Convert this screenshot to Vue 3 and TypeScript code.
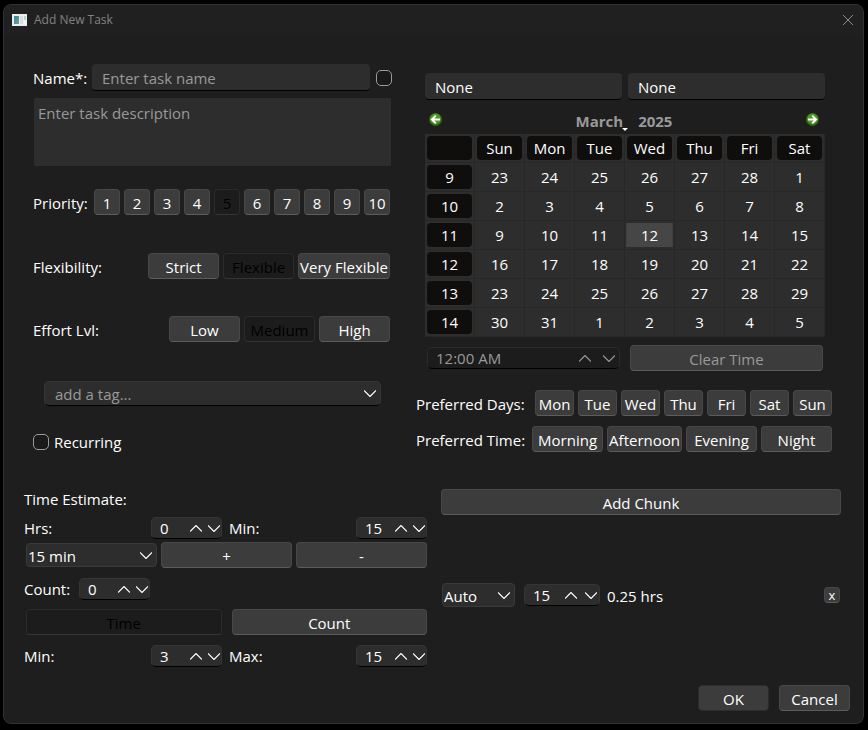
<script setup lang="ts">
import { ref } from 'vue'

interface Week {
  number: number
  days: number[]
}

const priorities = [1, 2, 3, 4, 5, 6, 7, 8, 9, 10]
const flexibilities = ['Strict', 'Flexible', 'Very Flexible']
const efforts = ['Low', 'Medium', 'High']
const weekDays = ['Mon', 'Tue', 'Wed', 'Thu', 'Fri', 'Sat', 'Sun']
const dayTimes = ['Morning', 'Afternoon', 'Evening', 'Night']
const calendarDays = ['Sun', 'Mon', 'Tue', 'Wed', 'Thu', 'Fri', 'Sat']
const weeks: Week[] = [
  { number: 9, days: [23, 24, 25, 26, 27, 28, 1] },
  { number: 10, days: [2, 3, 4, 5, 6, 7, 8] },
  { number: 11, days: [9, 10, 11, 12, 13, 14, 15] },
  { number: 12, days: [16, 17, 18, 19, 20, 21, 22] },
  { number: 13, days: [23, 24, 25, 26, 27, 28, 29] },
  { number: 14, days: [30, 31, 1, 2, 3, 4, 5] },
]

const priority = ref(5)
const flexibility = ref('Flexible')
const effort = ref('Medium')
const mode = ref('Time')
const selected = ref('11-12')

const name = ref('')
const description = ref('')
const tag = ref('')
const startDate = ref('None')
const dueDate = ref('None')
const time = ref('12:00 AM')
const hours = ref(0)
const minutes = ref(15)
const count = ref(0)
const minChunk = ref(3)
const maxChunk = ref(15)
const chunkSize = ref(15)
</script>

<template>
  <main class="dialog">
    <header class="titlebar">
      <svg class="app-icon" viewBox="0 0 15 12" aria-hidden="true">
        <defs>
          <linearGradient id="pane" x1="0" y1="0" x2="1" y2="1">
            <stop offset="0" stop-color="#3f7fa6" />
            <stop offset="1" stop-color="#5fae86" />
          </linearGradient>
        </defs>
        <rect width="15" height="12" fill="#e9eef2" />
        <rect x="2" y="2" width="5" height="8" fill="url(#pane)" />
        <rect x="8" y="2" width="3" height="8" fill="#dcdcdc" />
        <rect x="12" y="2" width="2" height="4" fill="#a9d8cf" />
        <rect x="12" y="6" width="2" height="4" fill="#f4f4f4" />
      </svg>
      <h1>Add New Task</h1>
      <button class="close" aria-label="Close">
        <svg viewBox="0 0 12 12" aria-hidden="true"><path d="M1 1 L11 11 M11 1 L1 11" /></svg>
      </button>
    </header>

    <div class="upper">
      <section class="details">
        <div class="row name-row">
          <label for="name">Name*:</label>
          <input id="name" v-model="name" class="line-input" type="text" placeholder="Enter task name" />
          <input class="check" type="checkbox" aria-label="Completed" />
        </div>
        <textarea v-model="description" placeholder="Enter task description" aria-label="Description"></textarea>

        <div class="row spread priority-row">
          <span>Priority:</span>
          <div class="group">
            <button v-for="p in priorities" :key="p" class="btn square" :disabled="p === priority" @click="priority = p">{{ p }}</button>
          </div>
        </div>
        <div class="row spread flexibility-row">
          <span>Flexibility:</span>
          <div class="group">
            <button v-for="f in flexibilities" :key="f" class="btn" :disabled="f === flexibility" @click="flexibility = f">{{ f }}</button>
          </div>
        </div>
        <div class="row spread effort-row">
          <span>Effort Lvl:</span>
          <div class="group">
            <button v-for="e in efforts" :key="e" class="btn" :disabled="e === effort" @click="effort = e">{{ e }}</button>
          </div>
        </div>

        <div class="field tag-field">
          <input v-model="tag" type="text" placeholder="add a tag..." aria-label="Tag" />
          <button class="step" aria-label="Show tags">
            <svg class="chevron" viewBox="0 0 12 7"><path d="M0 0.5 L6 6.5 L12 0.5" /></svg>
          </button>
        </div>
        <label class="recurring"><input class="check" type="checkbox" />Recurring</label>
      </section>

      <section class="schedule">
        <div class="calendar-block">
          <div class="dates">
            <input v-model="startDate" class="line-input" type="text" aria-label="Start date" />
            <input v-model="dueDate" class="line-input" type="text" aria-label="Due date" />
          </div>
          <div class="nav">
            <button class="nav-arrow" aria-label="Previous month">
              <svg viewBox="0 0 13 13">
                <circle cx="6.5" cy="6.5" r="6.5" fill="#2f6b12" />
                <circle cx="6.5" cy="5.8" r="5.4" fill="#4f9526" />
                <path d="M11 6.5 H3 M6.8 2.6 L2.9 6.5 L6.8 10.4" />
              </svg>
            </button>
            <div class="month">
              <button class="month-name">March<i class="caret"></i></button>
              <button>2025</button>
            </div>
            <button class="nav-arrow" aria-label="Next month">
              <svg viewBox="0 0 13 13">
                <circle cx="6.5" cy="6.5" r="6.5" fill="#2f6b12" />
                <circle cx="6.5" cy="5.8" r="5.4" fill="#4f9526" />
                <path d="M2 6.5 H10 M6.2 2.6 L10.1 6.5 L6.2 10.4" />
              </svg>
            </button>
          </div>
          <table class="calendar">
            <thead>
              <tr>
                <td><span class="pill"></span></td>
                <th v-for="d in calendarDays" :key="d" scope="col"><span class="pill">{{ d }}</span></th>
              </tr>
            </thead>
            <tbody>
              <tr v-for="w in weeks" :key="w.number">
                <th scope="row"><span class="pill">{{ w.number }}</span></th>
                <td
                  v-for="d in w.days"
                  :key="d"
                  :class="{ selected: selected === `${w.number}-${d}` }"
                  @click="selected = `${w.number}-${d}`"
                ><span class="day">{{ d }}</span></td>
              </tr>
            </tbody>
          </table>
          <div class="time-row">
            <div class="field time-field">
              <input v-model="time" type="text" aria-label="Time" disabled />
              <button class="step" aria-label="Later" disabled><svg class="chevron" viewBox="0 0 12 7"><path d="M0 6.5 L6 0.5 L12 6.5" /></svg></button>
              <button class="step" aria-label="Earlier" disabled><svg class="chevron" viewBox="0 0 12 7"><path d="M0 0.5 L6 6.5 L12 0.5" /></svg></button>
            </div>
            <button class="btn muted">Clear Time</button>
          </div>
        </div>

        <div class="row spread days-row">
          <span>Preferred Days:</span>
          <div class="group">
            <button v-for="d in weekDays" :key="d" class="btn narrow">{{ d }}</button>
          </div>
        </div>
        <div class="row spread times-row">
          <span>Preferred Time:</span>
          <div class="group">
            <button v-for="t in dayTimes" :key="t" class="btn">{{ t }}</button>
          </div>
        </div>
      </section>
    </div>

    <div class="lower">
      <section class="estimate">
        <h2>Time Estimate:</h2>
        <div class="pair">
          <div class="row spread">
            <label for="hours">Hrs:</label>
            <div class="field spin">
              <input id="hours" v-model.number="hours" type="text" />
              <button class="step" aria-label="More hours" @click="hours++"><svg class="chevron" viewBox="0 0 12 7"><path d="M0 6.5 L6 0.5 L12 6.5" /></svg></button>
              <button class="step" aria-label="Fewer hours" @click="hours--"><svg class="chevron" viewBox="0 0 12 7"><path d="M0 0.5 L6 6.5 L12 0.5" /></svg></button>
            </div>
          </div>
          <div class="row spread">
            <label for="minutes">Min:</label>
            <div class="field spin">
              <input id="minutes" v-model.number="minutes" type="text" />
              <button class="step" aria-label="More minutes" @click="minutes++"><svg class="chevron" viewBox="0 0 12 7"><path d="M0 6.5 L6 0.5 L12 6.5" /></svg></button>
              <button class="step" aria-label="Fewer minutes" @click="minutes--"><svg class="chevron" viewBox="0 0 12 7"><path d="M0 0.5 L6 6.5 L12 0.5" /></svg></button>
            </div>
          </div>
        </div>
        <div class="step-row">
          <div class="select">
            <select aria-label="Step"><option>15 min</option></select>
            <svg class="chevron" viewBox="0 0 12 7"><path d="M0 0.5 L6 6.5 L12 0.5" /></svg>
          </div>
          <button class="btn">+</button>
          <button class="btn">-</button>
        </div>
        <div class="row count-row">
          <label for="count">Count:</label>
          <div class="field spin">
            <input id="count" v-model.number="count" type="text" />
            <button class="step" aria-label="Higher count" @click="count++"><svg class="chevron" viewBox="0 0 12 7"><path d="M0 6.5 L6 0.5 L12 6.5" /></svg></button>
            <button class="step" aria-label="Lower count" @click="count--"><svg class="chevron" viewBox="0 0 12 7"><path d="M0 0.5 L6 6.5 L12 0.5" /></svg></button>
          </div>
        </div>
        <div class="mode-row">
          <button class="btn" :disabled="mode === 'Time'" @click="mode = 'Time'">Time</button>
          <button class="btn" :disabled="mode === 'Count'" @click="mode = 'Count'">Count</button>
        </div>
        <div class="pair">
          <div class="row spread">
            <label for="min-chunk">Min:</label>
            <div class="field spin">
              <input id="min-chunk" v-model.number="minChunk" type="text" />
              <button class="step" aria-label="Raise minimum" @click="minChunk++"><svg class="chevron" viewBox="0 0 12 7"><path d="M0 6.5 L6 0.5 L12 6.5" /></svg></button>
              <button class="step" aria-label="Lower minimum" @click="minChunk--"><svg class="chevron" viewBox="0 0 12 7"><path d="M0 0.5 L6 6.5 L12 0.5" /></svg></button>
            </div>
          </div>
          <div class="row spread">
            <label for="max-chunk">Max:</label>
            <div class="field spin">
              <input id="max-chunk" v-model.number="maxChunk" type="text" />
              <button class="step" aria-label="Raise maximum" @click="maxChunk++"><svg class="chevron" viewBox="0 0 12 7"><path d="M0 6.5 L6 0.5 L12 6.5" /></svg></button>
              <button class="step" aria-label="Lower maximum" @click="maxChunk--"><svg class="chevron" viewBox="0 0 12 7"><path d="M0 0.5 L6 6.5 L12 0.5" /></svg></button>
            </div>
          </div>
        </div>
      </section>

      <section class="chunks">
        <button class="btn">Add Chunk</button>
        <div class="row chunk-row">
          <div class="select auto">
            <select aria-label="Chunk type"><option>Auto</option></select>
            <svg class="chevron" viewBox="0 0 12 7"><path d="M0 0.5 L6 6.5 L12 0.5" /></svg>
          </div>
          <div class="field spin wide">
            <input v-model.number="chunkSize" type="text" aria-label="Chunk size" />
            <button class="step" aria-label="Longer chunk" @click="chunkSize++"><svg class="chevron" viewBox="0 0 12 7"><path d="M0 6.5 L6 0.5 L12 6.5" /></svg></button>
            <button class="step" aria-label="Shorter chunk" @click="chunkSize--"><svg class="chevron" viewBox="0 0 12 7"><path d="M0 0.5 L6 6.5 L12 0.5" /></svg></button>
          </div>
          <span>0.25 hrs</span>
          <button class="btn remove">x</button>
        </div>
      </section>
    </div>

    <footer class="actions">
      <button class="btn flat">OK</button>
      <button class="btn">Cancel</button>
    </footer>
  </main>
</template>

<style>
body {
  background: #000;
}
</style>

<style scoped>
.dialog,
.dialog * {
  box-sizing: border-box;
}

.dialog {
  margin: 4px 4px 5px 3px;
  border: 1px solid #323232;
  border-radius: 8px;
  background: #1e1e1e;
  color: #fff;
  font: 15px/24px "Open Sans", "Noto Sans", sans-serif;
  overflow: hidden;
}

button,
input,
select,
textarea {
  margin: 0;
  padding: 0;
  border: 0;
  background: none;
  color: inherit;
  font: inherit;
  outline: none;
}

.titlebar {
  display: flex;
  align-items: center;
  height: 30px;
  padding: 0 9px 0 8px;
  background: #202020;
  color: #828282;
}

.titlebar h1 {
  flex: 1;
  margin: 0 0 0 7px;
  font-size: 12px;
  font-weight: 400;
}

.app-icon {
  width: 15px;
  height: 12px;
}

.close,
.close svg {
  display: block;
  width: 12px;
  height: 12px;
}

.close path {
  fill: none;
  stroke: #8c8c8c;
}

.upper {
  display: grid;
  grid-template-columns: 359fr 416fr;
  gap: 24px;
  padding: 29px 31px 0 29px;
}

.details {
  display: flex;
  flex-direction: column;
}

.row {
  display: flex;
  align-items: center;
}

.spread {
  justify-content: space-between;
}

.spread > span {
  padding-top: 2px;
}

.group {
  display: flex;
  gap: 4px;
}

.line-input {
  min-width: 0;
  height: 27px;
  padding: 2px 10px 0;
  border-bottom: 1px solid #000;
  border-radius: 4px;
  background: #2d2d2d;
}

::placeholder {
  color: #999;
  opacity: 1;
}

.name-row label {
  width: 59px;
}

.name-row .line-input {
  flex: 1;
  margin-right: 6px;
}

.check {
  appearance: none;
  flex: none;
  width: 16px;
  height: 16px;
  border: 1px solid #9a9a9a;
  border-radius: 5px;
  background: #1a1a1a;
}

textarea {
  display: block;
  height: 68px;
  margin: 7px 1px 0;
  padding: 3px 4px;
  background: #2d2d2d;
  resize: none;
}

.details .spread {
  padding-right: 2px;
}

.priority-row {
  margin-top: 23px;
}

.flexibility-row {
  margin-top: 38px;
}

.effort-row {
  margin-top: 37px;
}

.btn {
  min-width: 71px;
  height: 26px;
  padding: 2px 1px 0;
  border: 1px solid #484848;
  border-bottom-color: #5c5c5c;
  border-radius: 4px;
  background: #3c3c3c;
  line-height: 22px;
  white-space: nowrap;
}

.btn:disabled {
  border-color: #2b2b2b;
  border-bottom-color: #353535;
  background: #1c1c1c;
  color: #000;
}

.btn.square {
  min-width: 26px;
}

.btn.narrow {
  min-width: 39px;
  padding: 2px 0 0;
}

.btn.muted {
  color: #999;
}

.btn.flat {
  border-color: #2c2c2c;
}

.field {
  display: flex;
  align-items: stretch;
  height: 22px;
  border: 1px solid #353535;
  border-bottom-color: #000;
  border-radius: 5px;
  background: #2d2d2d;
}

.field input {
  flex: 1;
  min-width: 0;
  width: 0;
  padding: 0 0 0 8px;
  line-height: 20px;
}

.step {
  display: grid;
  place-items: center;
  width: 22px;
}

.step:last-child {
  width: 14px;
}

.chevron {
  display: block;
  width: 12px;
  height: 7px;
}

.chevron path {
  fill: none;
  stroke: currentColor;
  stroke-width: 1.2;
}

.tag-field {
  height: 25px;
  margin: 39px 11px 0;
}

.tag-field input {
  padding: 1px 0 0 10px;
}

.tag-field .step {
  width: 20px;
}

.recurring {
  display: flex;
  align-items: center;
  gap: 5px;
  margin-top: 24px;
}

.schedule {
  padding-top: 9px;
}

.calendar-block {
  margin: 0 7px 0 9px;
}

.dates {
  display: grid;
  grid-template-columns: 1fr 1fr;
  gap: 6px;
}

.nav {
  display: flex;
  align-items: center;
  justify-content: space-between;
  height: 34px;
  padding: 4px 6px 0 4px;
}

.nav-arrow,
.nav-arrow svg {
  display: block;
  width: 13px;
  height: 13px;
}

.nav-arrow path {
  fill: none;
  stroke: #fff;
  stroke-width: 2;
}

.month {
  display: flex;
  gap: 15px;
  padding-top: 4px;
  color: #999;
  font-weight: 700;
}

.month-name {
  position: relative;
}

.caret {
  position: absolute;
  right: -5px;
  bottom: 2px;
  border: 3px solid transparent;
  border-top-color: #fff;
  border-bottom: 0;
}

.calendar {
  width: 100%;
  border-spacing: 0;
  table-layout: fixed;
  background: #2d2d2d;
  text-align: center;
}

.calendar th,
.calendar td {
  height: 29px;
  padding: 2px;
  border-right: 1px solid #272727;
  border-bottom: 1px solid #272727;
  font-weight: 400;
}

.pill,
.day {
  display: block;
  height: 24px;
  border-radius: 4px;
  line-height: 25px;
}

.pill {
  background: #0f0e0c;
}

.calendar .selected {
  padding: 2px 1px;
}

.selected .day {
  border: solid #3f3f3f;
  border-width: 0 1px;
  border-radius: 0;
  background: #464646;
}

.time-row {
  display: grid;
  grid-template-columns: 1fr 1fr;
  align-items: center;
  gap: 10px;
  margin: 8px 2px 0;
}

.time-field {
  border-color: #2b2b2b;
  border-bottom-color: #000;
  background: #1c1c1c;
  color: #999;
}

.time-field .step {
  width: 28px;
}

.time-field .step:last-child {
  width: 20px;
}

.days-row {
  margin-top: 19px;
}

.times-row {
  margin-top: 10px;
}

.lower {
  display: grid;
  grid-template-columns: 403fr 400fr;
  gap: 14px;
  padding: 0 22px 0 20px;
  margin-top: 35px;
}

.estimate h2 {
  margin: 0;
  font-size: 15px;
  font-weight: 400;
  line-height: 20px;
}

.pair {
  display: grid;
  grid-template-columns: 1fr 1fr;
  gap: 7px;
  margin-top: 7px;
}

.spin {
  width: 71px;
}

.spin.wide {
  width: 76px;
}

.spin.wide .step {
  width: 24px;
}

.spin.wide .step:last-child {
  width: 16px;
}

.step-row {
  display: grid;
  grid-template-columns: 1fr 1fr 1fr;
  align-items: center;
  gap: 4px;
  margin-top: 2px;
  padding-left: 2px;
}

.select {
  position: relative;
}

.select select {
  display: block;
  appearance: none;
  width: 100%;
  height: 24px;
  padding-left: 1px;
  border: 1px solid #3a3a3a;
  border-radius: 4px;
  background: #2d2d2d;
}

.select .chevron {
  position: absolute;
  top: 9px;
  right: 5px;
  pointer-events: none;
}

.count-row {
  margin-top: 9px;
}

.count-row label {
  width: 55px;
}

.mode-row {
  display: grid;
  grid-template-columns: 1fr 1fr;
  gap: 10px;
  margin-top: 8px;
  padding-left: 2px;
}

.mode-row + .pair {
  margin-top: 9px;
}

.chunks > .btn {
  display: block;
  width: 100%;
}

.chunk-row {
  margin-top: 67px;
  padding: 0 1px;
}

.chunk-row > span {
  padding-top: 2px;
}

.auto {
  width: 73px;
  margin-right: 9px;
}

.chunk-row .spin {
  margin-right: 7px;
}

.btn.remove {
  min-width: 16px;
  height: 16px;
  margin-left: auto;
  padding: 1px 0 0;
  font-size: 13px;
  line-height: 13px;
}

.actions {
  display: flex;
  justify-content: flex-end;
  gap: 10px;
  padding: 17px 13px 12px;
}
</style>
